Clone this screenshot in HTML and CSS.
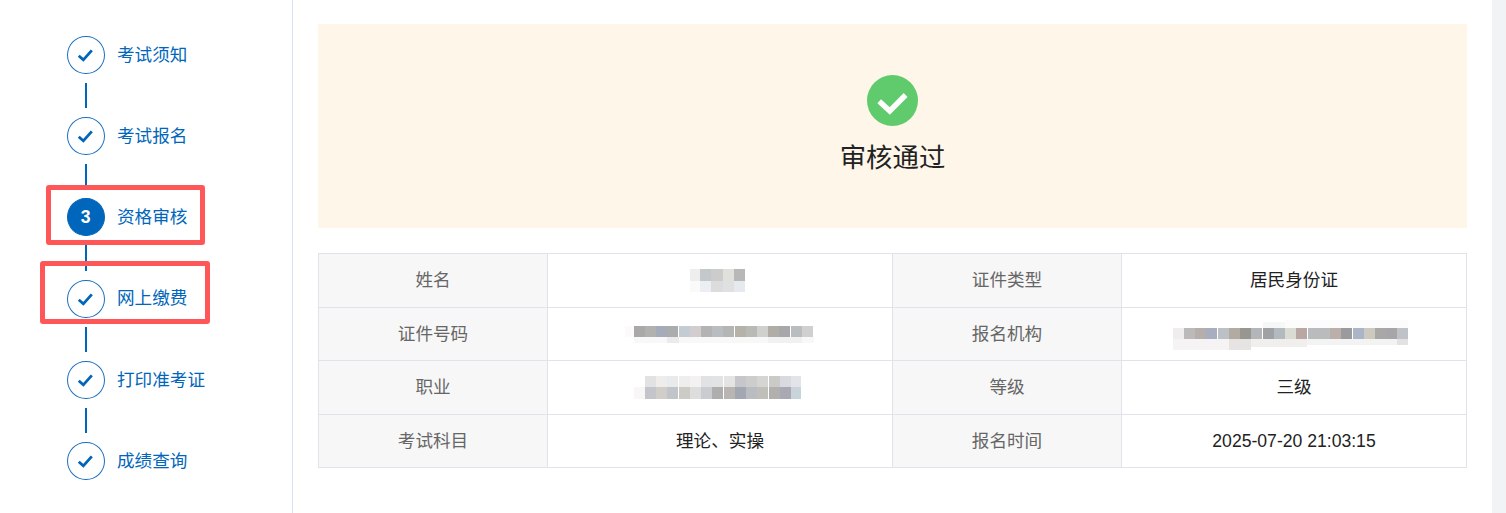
FILE: index.html
```html
<!DOCTYPE html>
<html lang="zh-CN">
<head>
<meta charset="utf-8">
<title>资格审核</title>
<link rel="stylesheet" href="styles.css">
</head>
<body>
<div class="page">
  <aside class="sidebar">
    <ol class="steps">
      <li class="step"><span class="dot"><svg class="tick" viewBox="0 0 38 38"><path d="M11.5 19.8 L16.4 24.2 L25.5 14"/></svg></span><span class="label">考试须知</span></li>
      <li class="link"></li>
      <li class="step"><span class="dot"><svg class="tick" viewBox="0 0 38 38"><path d="M11.5 19.8 L16.4 24.2 L25.5 14"/></svg></span><span class="label">考试报名</span></li>
      <li class="link"></li>
      <li class="step current"><span class="dot">3</span><span class="label">资格审核</span><span class="mark mark-a"></span></li>
      <li class="link"></li>
      <li class="step"><span class="dot"><svg class="tick" viewBox="0 0 38 38"><path d="M11.5 19.8 L16.4 24.2 L25.5 14"/></svg></span><span class="label">网上缴费</span><span class="mark mark-b"></span></li>
      <li class="link"></li>
      <li class="step"><span class="dot"><svg class="tick" viewBox="0 0 38 38"><path d="M11.5 19.8 L16.4 24.2 L25.5 14"/></svg></span><span class="label">打印准考证</span></li>
      <li class="link"></li>
      <li class="step"><span class="dot"><svg class="tick" viewBox="0 0 38 38"><path d="M11.5 19.8 L16.4 24.2 L25.5 14"/></svg></span><span class="label">成绩查询</span></li>
    </ol>
  </aside>
  <main class="main">
    <section class="banner">
      <svg class="ok" viewBox="0 0 51 51"><circle cx="25.5" cy="25.5" r="25.5"/><path d="M12.2 26.2 L22.8 36 L38.6 20"/></svg>
      <h1 class="status">审核通过</h1>
    </section>
    <table class="info">
      <colgroup><col class="c-k"><col class="c-v"><col class="c-k"><col class="c-v"></colgroup>
      <tbody>
        <tr class="tall">
          <th>姓名</th>
          <td class="pic"><svg class="mosaic" width="60" height="23" viewBox="0 0 60 23" shape-rendering="crispEdges">
            <rect x="0" width="10" height="12" fill="#f0edee"/><rect x="10" width="11" height="12" fill="#c3c8cb"/><rect x="21" width="12" height="12" fill="#cccccc"/><rect x="33" width="11" height="12" fill="#e0e1dc"/><rect x="44" width="11" height="12" fill="#b8b8b8"/>
            <rect x="0" y="12" width="10" height="11" fill="#fafafa"/><rect x="10" y="12" width="11" height="11" fill="#ebeef2"/><rect x="21" y="12" width="12" height="11" fill="#dcdcdc"/><rect x="33" y="12" width="11" height="11" fill="#dfe0e1"/><rect x="44" y="12" width="11" height="11" fill="#e6e9ed"/>
          </svg></td>
          <th>证件类型</th>
          <td>居民身份证</td>
        </tr>
        <tr>
          <th>证件号码</th>
          <td class="pic"><svg class="mosaic" width="190" height="17" viewBox="0 0 190 17" shape-rendering="crispEdges">
            <g><rect x="9" width="11.3" height="11" fill="#a9a9a9"/><rect x="20" width="11.3" height="11" fill="#b1b1af"/><rect x="31" width="11.3" height="11" fill="#a5abb8"/><rect x="42" width="11.3" height="11" fill="#abadad"/><rect x="54" width="11.3" height="11" fill="#c3ccd2"/><rect x="65" width="11.3" height="11" fill="#d2cdce"/><rect x="76" width="11.3" height="11" fill="#b3b3b3"/><rect x="87" width="11.3" height="11" fill="#b9bcc0"/><rect x="98" width="11.3" height="11" fill="#b3b6b5"/><rect x="110" width="11.3" height="11" fill="#b6b1a9"/><rect x="121" width="11.3" height="11" fill="#b9bab6"/><rect x="132" width="11.3" height="11" fill="#d0d0ce"/><rect x="143" width="11.3" height="11" fill="#b0aca6"/><rect x="154" width="11.3" height="11" fill="#a8a7aa"/><rect x="166" width="11.3" height="11" fill="#babdc0"/><rect x="177" width="11.3" height="11" fill="#d0d0d1"/></g>
            <rect x="0" width="9" height="11" fill="#fcfbfa"/>
            <rect x="9" y="11" width="180" height="6" fill="#f8f8f9"/><rect x="42" y="11" width="12" height="6" fill="#ebebeb"/><rect x="143" y="11" width="34" height="6" fill="#f1f1f1"/>
          </svg></td>
          <th>报名机构</th>
          <td class="pic"><svg class="mosaic" width="242" height="31" viewBox="0 0 242 31" shape-rendering="crispEdges">
            <rect x="0" y="9" width="11" height="11" fill="#efeded"/><rect x="11" y="9" width="11.3" height="11" fill="#bbb9b9"/><rect x="22" y="9" width="11.3" height="11" fill="#b5aeab"/><rect x="33" y="9" width="11.3" height="11" fill="#a8adbf"/><rect x="45" y="9" width="11.3" height="11" fill="#bcc1c6"/><rect x="56" y="9" width="11.3" height="11" fill="#b3aba1"/><rect x="67" y="9" width="11.3" height="11" fill="#989691"/><rect x="78" y="9" width="11.3" height="11" fill="#b3b6b8"/><rect x="90" y="9" width="11.3" height="11" fill="#9fa1a5"/><rect x="101" y="9" width="11.3" height="11" fill="#b2b9bf"/><rect x="112" y="9" width="11.3" height="11" fill="#dadbd3"/><rect x="123" y="9" width="11.3" height="11" fill="#b9a7a3"/><rect x="135" y="9" width="11.3" height="11" fill="#b8bcbd"/><rect x="146" y="9" width="11.3" height="11" fill="#babcbc"/><rect x="157" y="9" width="11.3" height="11" fill="#bbb0a9"/><rect x="168" y="9" width="11.3" height="11" fill="#9b9a9d"/><rect x="180" y="9" width="11.3" height="11" fill="#aab6c8"/><rect x="191" y="9" width="11.3" height="11" fill="#cec9bf"/><rect x="202" y="9" width="11.3" height="11" fill="#a9a8a6"/><rect x="213" y="9" width="11.3" height="11" fill="#a7a5a8"/><rect x="224" y="9" width="11" height="11" fill="#bfc2c6"/>
            <rect x="0" y="20" width="56" height="11" fill="#f5f3f3"/><rect x="56" y="20" width="22" height="11" fill="#e6e4e2"/><rect x="78" y="20" width="56" height="8" fill="#f0efee"/><rect x="134" y="20" width="90" height="6" fill="#f3f3f4"/><rect x="224" y="20" width="11" height="6" fill="#e2e2e2"/>
            <rect x="90" y="3" width="22" height="6" fill="#f6f7f7"/><rect x="112" y="1" width="123" height="8" fill="#fcfcfc"/>
          </svg></td>
        </tr>
        <tr class="tall">
          <th>职业</th>
          <td class="pic"><svg class="mosaic" width="172" height="23" viewBox="0 0 172 23" shape-rendering="crispEdges">
            <rect x="11" width="11.3" height="11" fill="#e2e2e2"/><rect x="22" width="11.3" height="11" fill="#eeedec"/><rect x="33" width="11.3" height="11" fill="#e9eaec"/><rect x="45" width="11.3" height="11" fill="#eeeeee"/><rect x="56" width="11.3" height="11" fill="#f3f2f0"/><rect x="67" width="11.3" height="11" fill="#e1e2e4"/><rect x="78" width="11.3" height="11" fill="#e2e4e4"/><rect x="90" width="11.3" height="11" fill="#e4e5e2"/><rect x="101" width="11.3" height="11" fill="#c6c7ca"/><rect x="112" width="11.3" height="11" fill="#cdcdcd"/><rect x="123" width="11.3" height="11" fill="#d5d5d3"/><rect x="135" width="11.3" height="11" fill="#cccac7"/><rect x="146" width="11.3" height="11" fill="#d8dae0"/><rect x="157" width="10" height="11" fill="#e2e4e9"/>
            <rect x="0" y="11" width="11" height="12" fill="#f8f7f6"/><rect x="11" y="11" width="11.3" height="12" fill="#c4c5ca"/><rect x="22" y="11" width="11.3" height="12" fill="#d1ceca"/><rect x="33" y="11" width="11.3" height="12" fill="#c0c5ca"/><rect x="45" y="11" width="11.3" height="12" fill="#cdcbc6"/><rect x="56" y="11" width="11.3" height="12" fill="#dddddd"/><rect x="67" y="11" width="11.3" height="12" fill="#cbccd2"/><rect x="78" y="11" width="11.3" height="12" fill="#aeaeae"/><rect x="90" y="11" width="11.3" height="12" fill="#b8b5b3"/><rect x="101" y="11" width="11.3" height="12" fill="#a3a7b2"/><rect x="112" y="11" width="11.3" height="12" fill="#b9bcc0"/><rect x="123" y="11" width="11.3" height="12" fill="#c1bfba"/><rect x="135" y="11" width="11.3" height="12" fill="#b1b0ae"/><rect x="146" y="11" width="11.3" height="12" fill="#a9a9b3"/><rect x="157" y="11" width="10" height="12" fill="#c8d3da"/>
          </svg></td>
          <th>等级</th>
          <td>三级</td>
        </tr>
        <tr>
          <th>考试科目</th>
          <td>理论、实操</td>
          <th>报名时间</th>
          <td class="latin">2025-07-20 21:03:15</td>
        </tr>
      </tbody>
    </table>
  </main>
  <div class="track"></div>
</div>
</body>
</html>
```
FILE: styles.css
```css
* { box-sizing: border-box; }
html, body { margin: 0; padding: 0; height: 100%; overflow: hidden; background: #fff; }
body { font-family: "Liberation Sans", "Noto Sans CJK SC", sans-serif; font-size: 17.6px; color: #222; }
.page { display: flex; height: 513px; }

.sidebar { flex: 0 0 293px; border-right: 1px solid #d6e3f4; padding: 36px 0 0 67px; }
.steps { list-style: none; margin: 0; padding: 0; }
.step { position: relative; display: flex; align-items: center; gap: 12.5px; height: 38px; color: #0066bb; }
.dot { flex: 0 0 37.5px; width: 37.5px; height: 38px; border-radius: 50%; border: 1px solid #1a6fbe; display: flex; align-items: center; justify-content: center; }
.tick { width: 36px; height: 36px; fill: none; stroke: #0066bb; stroke-width: 3; }
.current .dot { background: #0066bb; border-color: #0066bb; color: #fff; font-weight: 700; font-size: 17.6px; }
.label { white-space: nowrap; padding-bottom: 3.4px; }
.link { width: 2px; height: 25.2px; margin: 9px 0 9px 18px; background: #0066bb; }

.mark { position: absolute; border: 5px solid #ff5657; border-radius: 3px; }
.mark-a { left: -21px; top: -13px; width: 159px; height: 60px; }
.mark-b { left: -27px; top: -19px; width: 170px; height: 63px; }

.main { flex: 0 0 1174px; padding: 24px 0 0 25px; }
.banner { height: 204px; width: 1149px; background: #fef6e9; padding-top: 51px; display: flex; flex-direction: column; align-items: center; }
.ok { width: 51px; height: 51px; display: block; }
.ok circle { fill: #5fcb6c; }
.ok path { fill: none; stroke: #fff; stroke-width: 5.4; }
.status { margin: 13px 0 0; font-size: 26.4px; font-weight: 400; line-height: 38px; color: #222; }

.info { width: 1149px; margin-top: 25px; border-collapse: collapse; table-layout: fixed; }
.c-k { width: 229px; }
.c-v { width: 345px; }
.info th, .info td { border: 1px solid #e0e3ea; height: 53px; padding: 0 0 4px; text-align: center; font-weight: 400; }
.info .tall th, .info .tall td { height: 54px; }
.info .pic, .info .latin { padding-bottom: 0; }
.info th { background: #f7f7f7; color: #666; }
.info td { color: #222; }
.mosaic { display: block; margin: 0 auto; }

.track { flex: 0 0 14px; margin-left: 25px; background: #f1f3f4; }
```
